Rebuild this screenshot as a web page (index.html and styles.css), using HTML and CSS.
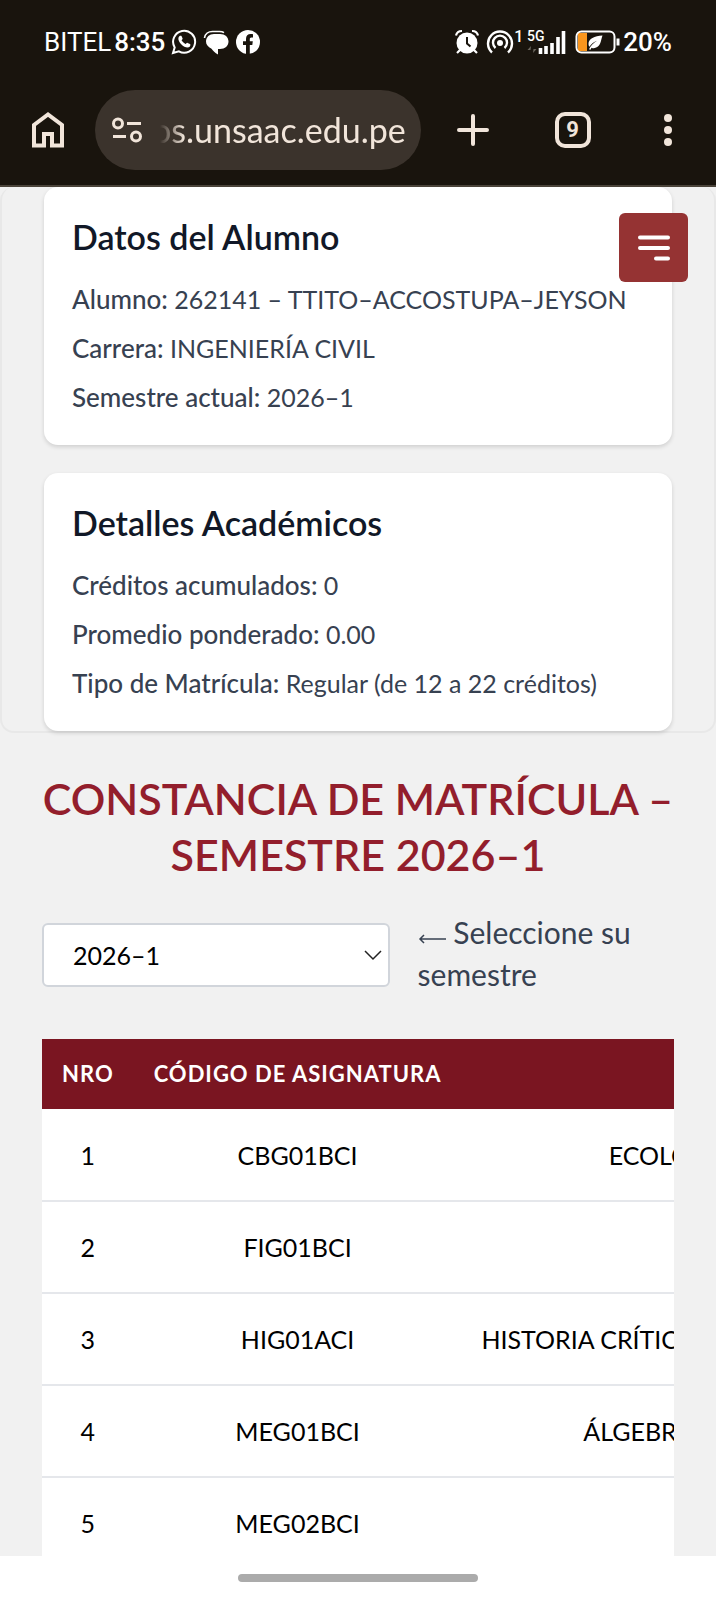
FILE: index.html
```
<!DOCTYPE html>
<html lang="es">
<head>
  <meta charset="UTF-8" />
  <meta name="viewport" content="width=device-width, initial-scale=1.0" />
  <title>Constancia de Matrícula</title>
  <link rel="stylesheet" href="styles.css">
</head>
<body>

  <header class="browser">
    <div class="status-bar">
      <div class="status-left">
        <span class="carrier">BITEL</span>
        <span class="clock">8:35</span>
        <svg class="status-icon" width="26" height="26" viewBox="0 0 26 26">
          <path d="M2 24l1.7-5.6a11 11 0 1 1 4.2 4z" fill="none" stroke="#fff" stroke-width="2"/>
          <path d="M8.6 7c-2 1.500-1.500 5 1.600 8.200s7 4.300 8.700 2.200c.7-1 .7-1.900.1-2.300l-2.400-1.200c-.6-.3-1 .1-1.700 1-.5.500-3.800-2.200-4.300-3.600.9-1 1.200-1.300.9-2l-1-2.200c-.3-.6-1.300-.6-1.900-.1z" fill="#fff"/>
        </svg>
        <svg class="status-icon" width="26" height="26" viewBox="0 0 26 26">
          <path d="M1.500 9c.5-4 4-6.500 8-6.500h7c2 0 3.500.5 4.500 1.200" fill="none" stroke="#fff" stroke-width="1.600"/>
          <path d="M11 5h6c5 0 8.500 3 8.500 7.500S22 20 17 20h-2v5.500c-3-1.500-5-3.500-6.500-5.700C5 18 3 15.500 3 12.500 3 8 6.500 5 11 5z" fill="#fff"/>
        </svg>
        <svg class="status-icon" width="26" height="26" viewBox="0 0 26 26">
          <circle cx="13" cy="13" r="12" fill="#fff"/>
          <path d="M11 25.500V16H8v-3.800h3V10c0-3.200 1.800-5 4.700-5 1.200 0 2.300.2 2.300.2v3.200h-1.500c-1.400 0-1.700.9-1.700 1.700v2.100h3l-.5 3.800h-2.500v9.500z" fill="#19140d"/>
        </svg>
      </div>
      <div class="status-right">
        <svg width="26" height="26" viewBox="0 0 26 26">
          <circle cx="13" cy="14" r="10.500" fill="#fff"/>
          <path d="M2 6.500a6 6 0 0 1 6-4.500M24 6.500A6 6 0 0 0 18 2M6 21l-3 3M20 21l3 3" fill="none" stroke="#fff" stroke-width="2.200"/>
          <path d="M13 8v6.500l3.500 3" fill="none" stroke="#19140d" stroke-width="2"/>
        </svg>
        <svg class="hotspot" width="28" height="26" viewBox="0 0 28 26">
          <circle cx="14" cy="14" r="3" fill="#fff"/>
          <path d="M9.500 19a7 7 0 1 1 9 0M6 23.500a12 12 0 1 1 16 0" fill="none" stroke="#fff" stroke-width="2.400"/>
        </svg>
        <span class="sim">1</span>
        <svg class="signal" width="40" height="26" viewBox="0 0 40 26">
          <text x="0" y="12" class="net">5G</text>
          <path d="M4 17l-3.500 4h3zM6 24l3.500-4h-3z" fill="#6b665e"/>
          <path d="M13.500 25v-6M19 25v-8M25 25V14M31 25V8M36.500 25V2" stroke="#fff" stroke-width="3.600"/>
        </svg>
        <svg class="battery" width="46" height="24" viewBox="0 0 46 24">
          <rect x="3" y="3" width="9" height="18" fill="#f9961e"/>
          <rect x="1.500" y="1.500" width="38" height="21" rx="5" fill="none" stroke="#fff" stroke-width="2"/>
          <path d="M43 8.500v7" stroke="#fff" stroke-width="3"/>
          <path d="M27.500 5.500c-8 .5-14 3-14 8.500 0 1 .3 2 .9 2.800 2-3 4.600-5 7.600-6-3.500 2.200-6.500 5-8 8.400l1.500.5 1-2c1.500.8 3.800.8 5.700-.6 4-2.800 3.800-7.800 5.300-11.600z" fill="#fff"/>
        </svg>
        <span class="charge">20%</span>
      </div>
    </div>

    <div class="toolbar">
      <button class="icon-btn" type="button" aria-label="Inicio">
        <svg width="32" height="36" viewBox="0 0 32 36">
          <path d="M2 33.500V13L16 2.500 30 13v20.500H20V22h-8v11.500z" fill="none" stroke="#f1e5da" stroke-width="4"/>
        </svg>
      </button>
      <div class="address">
        <svg class="site-info" width="30" height="26" viewBox="0 0 30 26">
          <g fill="none" stroke="#f1e5da" stroke-width="3">
            <circle cx="6" cy="6.500" r="4.500"/>
            <path d="M15 6.500h14M1 19.500h13"/>
            <circle cx="24" cy="19.500" r="4.500"/>
          </g>
        </svg>
        <input class="url" type="text" value="os.unsaac.edu.pe" aria-label="Dirección web">
      </div>
      <div class="toolbar-actions">
        <button class="icon-btn" type="button" aria-label="Nueva pestaña">
          <svg width="32" height="32" viewBox="0 0 32 32">
            <path d="M16 2v28M2 16h28" stroke="#f1e5da" stroke-width="4" stroke-linecap="round"/>
          </svg>
        </button>
        <button class="tabs" type="button" aria-label="Pestañas">9</button>
        <button class="icon-btn" type="button" aria-label="Más opciones">
          <svg width="16" height="34" viewBox="0 0 16 34" fill="#f1e5da">
            <circle cx="8" cy="5" r="4"/>
            <circle cx="8" cy="17" r="4"/>
            <circle cx="8" cy="29" r="4"/>
          </svg>
        </button>
      </div>
    </div>
  </header>

  <main class="page">
    <button class="menu-btn" type="button" aria-label="Abrir menú">
      <svg width="32" height="26" viewBox="0 0 32 26">
        <path d="M2 2.500h28M2 13h28M18 23.500h12" stroke="#fff" stroke-width="4" stroke-linecap="round"/>
      </svg>
    </button>

    <section class="summary">
      <article class="card">
        <h2>Datos del Alumno</h2>
        <p><strong>Alumno:</strong> 262141 – TTITO–ACCOSTUPA–JEYSON</p>
        <p><strong>Carrera:</strong> INGENIERÍA CIVIL</p>
        <p><strong>Semestre actual:</strong> 2026–1</p>
      </article>
      <article class="card">
        <h2>Detalles Académicos</h2>
        <p><strong>Créditos acumulados:</strong> 0</p>
        <p><strong>Promedio ponderado:</strong> 0.00</p>
        <p><strong>Tipo de Matrícula:</strong> Regular (de 12 a 22 créditos)</p>
      </article>
    </section>

    <section class="enrollment">
      <h1>CONSTANCIA DE MATRÍCULA – SEMESTRE 2026–1</h1>

      <div class="semester">
        <div class="select-wrap">
          <select id="semestre" name="semestre">
            <option>2026–1</option>
          </select>
          <svg class="chevron" width="18" height="11" viewBox="0 0 18 11">
            <path d="M1 1l8 8 8-8" fill="none" stroke="#222" stroke-width="1.500"/>
          </svg>
        </div>
        <label for="semestre">
          <svg width="28" height="12" viewBox="0 0 28 12">
            <path d="M6 3L2 7l4 4M2 7h26" fill="none" stroke="#374151" stroke-width="1.500"/>
          </svg>
          Seleccione su semestre
        </label>
      </div>

      <div class="table-wrap">
        <table>
          <thead>
            <tr><th>NRO</th><th>CÓDIGO DE ASIGNATURA</th><th>ASIGNATURA</th></tr>
          </thead>
          <tbody>
            <tr><td>1</td><td>CBG01BCI</td><td>ECOLOGÍA Y MEDIO FÍSICO</td></tr>
            <tr><td>2</td><td>FIG01BCI</td><td>FÍSICA I</td></tr>
            <tr><td>3</td><td>HIG01ACI</td><td>HISTORIA CRÍTICA DEL PERÚ Y DEL MUNDO HOY</td></tr>
            <tr><td>4</td><td>MEG01BCI</td><td>ÁLGEBRA LINEAL Y GEOMETRÍA</td></tr>
            <tr><td>5</td><td>MEG02BCI</td><td>CÁLCULO I</td></tr>
          </tbody>
        </table>
      </div>
    </section>
  </main>

  <footer class="nav-bar">
    <div class="nav-handle"></div>
  </footer>

</body>
</html>
```
FILE: styles.css
```
* {
  box-sizing: border-box;
}

body {
  margin: 0;
  height: 100vh;
  display: flex;
  flex-direction: column;
  background-color: #f1f1f1;
  font-family: Lato, "Liberation Sans", sans-serif;
  color: #374151;
}

h1, h2, p {
  margin: 0;
}

button {
  border: none;
  padding: 0;
  background: none;
  cursor: pointer;
}

svg {
  display: block;
  flex-shrink: 0;
}

/* browser chrome */
.browser {
  flex-shrink: 0;
  background-color: #19140d;
  border-bottom: 2px solid #4a4339;
}

.status-bar {
  display: flex;
  justify-content: space-between;
  align-items: center;
  padding: 26px 44px 0;
  height: 58px;
  color: #fff;
  font-family: Roboto, sans-serif;
  font-size: 26px;
  line-height: 32px;
}

.status-left,
.status-right {
  display: flex;
  align-items: center;
}

.carrier {
  font-size: 26px;
}

.clock {
  margin-left: 3px;
  font-weight: 500;
}

.status-icon {
  margin-left: 6px;
}

.hotspot {
  margin-left: 6px;
}

.sim {
  align-self: flex-start;
  font-size: 16px;
  font-weight: 500;
  line-height: 22px;
}

.signal {
  margin-left: 4px;
}

.net {
  fill: #fff;
  font-size: 14px;
  font-weight: 500;
}

.battery {
  margin: 0 2px 0 8px;
}

.charge {
  font-weight: 500;
}

.toolbar {
  display: flex;
  align-items: center;
  padding: 32px 40px 15px 32px;
}

.icon-btn {
  flex-shrink: 0;
}

.address {
  display: flex;
  align-items: center;
  width: 326px;
  height: 80px;
  margin-left: 31px;
  padding: 0 14px 0 17px;
  border-radius: 40px;
  background-color: #3b332c;
}

.url {
  flex: 1;
  min-width: 0;
  margin-left: 18px;
  padding: 0;
  border: none;
  outline: none;
  background: none;
  color: #f1e5da;
  font-family: Lato, sans-serif;
  font-size: 34px;
  line-height: 40px;
  text-indent: -8px;
  -webkit-mask-image: linear-gradient(to right, transparent, #000 24px);
  mask-image: linear-gradient(to right, transparent, #000 24px);
}

.toolbar-actions {
  flex: 1;
  display: flex;
  justify-content: space-between;
  align-items: center;
  margin-left: 36px;
}

.tabs {
  width: 36px;
  height: 36px;
  margin-right: 4px;
  border: 4px solid #f1e5da;
  border-radius: 10px;
  color: #f1e5da;
  font-family: Roboto, sans-serif;
  font-size: 22px;
  font-weight: 700;
  line-height: 28px;
}

/* page */
.page {
  position: relative;
  flex: 1;
  min-height: 0;
  overflow: hidden;
}

.menu-btn {
  position: absolute;
  top: 26px;
  right: 28px;
  display: flex;
  align-items: center;
  justify-content: center;
  width: 69px;
  height: 69px;
  border-radius: 6px;
  background-color: #953333;
}

.summary {
  display: flex;
  flex-direction: column;
  gap: 28px;
  padding: 0 42px;
  border: 2px solid #e8e8e8;
  border-top: none;
  border-radius: 14px;
}

.card {
  display: flex;
  flex-direction: column;
  gap: 14px;
  padding: 28px 28px 30px;
  border-radius: 14px;
  background-color: #fff;
  box-shadow: 0 2px 4px rgba(0, 0, 0, 0.14);
}

.card h2 {
  margin-bottom: 10px;
  color: #111827;
  font-size: 34px;
  font-weight: 600;
  line-height: 43px;
}

.card p {
  font-size: 25px;
  line-height: 35px;
}

.card strong {
  font-size: 26px;
  font-weight: 500;
}

.enrollment {
  padding: 38px 42px 0;
}

.enrollment h1 {
  color: #931e2c;
  font-size: 43px;
  font-weight: 600;
  line-height: 56px;
  text-align: center;
}

.semester {
  display: flex;
  align-items: center;
  gap: 28px;
  margin-top: 28px;
}

.select-wrap {
  position: relative;
  flex: 0 0 55%;
}

.select-wrap select {
  display: block;
  width: 100%;
  height: 64px;
  padding: 0 29px;
  border: 2px solid #d1d5db;
  border-radius: 6px;
  background-color: #fff;
  color: #000;
  font-family: inherit;
  font-size: 25px;
  appearance: none;
}

.chevron {
  position: absolute;
  top: 27px;
  right: 8px;
}

.semester label {
  padding-bottom: 4px;
  font-size: 30px;
  line-height: 42px;
}

.semester label svg {
  display: inline-block;
}

.table-wrap {
  margin-top: 40px;
  overflow: hidden;
  background-color: #fff;
}

table {
  border-collapse: collapse;
  white-space: nowrap;
  text-align: center;
}

th {
  height: 70px;
  padding: 0 20px 2px;
  background-color: #7a1521;
  color: #fff;
  font-size: 22px;
  font-weight: 700;
  letter-spacing: 1px;
}

td {
  height: 92px;
  padding: 0 20px;
  border-bottom: 2px solid #e5e7eb;
  color: #000;
  font-size: 25px;
}

/* system gesture bar */
.nav-bar {
  flex-shrink: 0;
  display: flex;
  align-items: center;
  justify-content: center;
  height: 44px;
  background-color: #fff;
}

.nav-handle {
  width: 240px;
  height: 8px;
  border-radius: 4px;
  background-color: #ababab;
}
```
